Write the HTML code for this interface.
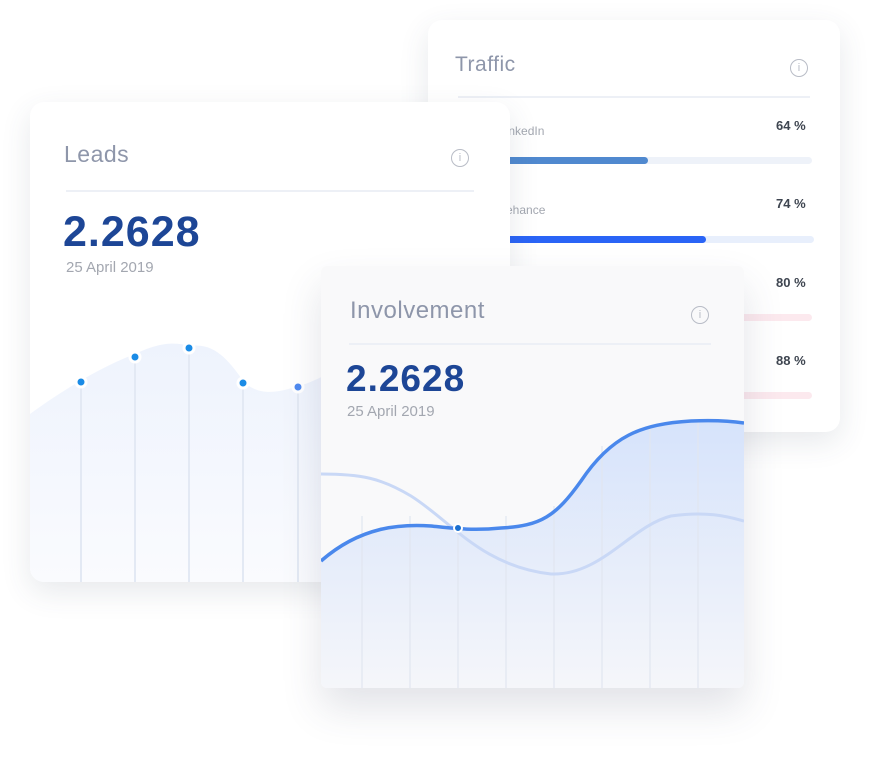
<!DOCTYPE html>
<html><head><style>
body{margin:0;width:871px;height:784px;background:#fff;position:relative;overflow:hidden;font-family:"Liberation Sans",sans-serif}
.card{position:absolute;border-radius:14px;background:#fff;box-shadow:0 10px 30px rgba(60,70,100,.12);overflow:hidden}
.title{position:absolute;color:#8e96aa;font-size:22px;letter-spacing:.5px}
.info{position:absolute;width:16px;height:16px;border:1.3px solid #b8bcc6;border-radius:50%;color:#b8bcc6;font-size:11px;text-align:center;line-height:16px}
.hr{position:absolute;height:2px;background:#edf0f6}
.num{position:absolute;color:#1d4696;font-weight:bold;font-size:40px}
.date{position:absolute;color:#a3a7b0;font-size:15px}
.pct{position:absolute;color:#3e4550;font-weight:bold;font-size:13px}
.lbl{position:absolute;color:#a3a7b0;font-size:12px}
.track{position:absolute;height:7px;border-radius:4px}
</style></head><body>
<div class="card" style="left:428px;top:20px;width:412px;height:412px">
<div class="title" style="left:27px;top:33px;font-size:21px">Traffic</div>
<div class="info" style="left:362px;top:39px">i</div>
<div class="hr" style="left:30px;top:76px;width:352px"></div>
<div class="lbl" style="left:71px;top:104px">LinkedIn</div><div class="pct" style="left:348px;top:98px">64 %</div>
<div class="track" style="left:30px;top:137px;width:354px;background:#eef2f9"></div>
<div class="track" style="left:30px;top:137px;width:190px;background:#5089cf"></div>
<div class="lbl" style="left:70px;top:183px">Behance</div><div class="pct" style="left:348px;top:176px">74 %</div>
<div class="track" style="left:30px;top:216px;width:356px;background:#e8effc"></div>
<div class="track" style="left:30px;top:216px;width:248px;background:#2a64f6"></div>
<div class="pct" style="left:348px;top:255px">80 %</div>
<div class="track" style="left:30px;top:294px;width:354px;background:#fce9ee"></div>
<div class="pct" style="left:348px;top:333px">88 %</div>
<div class="track" style="left:30px;top:372px;width:354px;background:#fce9ee"></div>
</div>
<div class="card" style="left:30px;top:102px;width:480px;height:480px">
<div class="title" style="left:34px;top:39px;font-size:23px">Leads</div>
<div class="info" style="left:421px;top:47px">i</div>
<div class="hr" style="left:36px;top:88px;width:408px"></div>
<div class="num" style="left:33px;top:106px;font-size:43px;letter-spacing:1px">2.2628</div>
<div class="date" style="left:36px;top:157px">25 April 2019</div>
<svg style="position:absolute;left:0;top:0" width="480" height="480">
<defs><linearGradient id="g1" x1="0" y1="0" x2="0" y2="1"><stop offset="0" stop-color="#eef3fd"/><stop offset="1" stop-color="#fafbfe"/></linearGradient></defs>
<path d="M0 312 C30 290 70 265 105 252 C130 240 145 240 160 244 C185 240 200 260 214 280 C230 295 250 290 268 284 C285 280 300 270 320 260 L320 480 L0 480Z" fill="url(#g1)"/>
<g stroke="#e3e9f4" stroke-width="2"><line x1="51" y1="280" x2="51" y2="480"/><line x1="105" y1="255" x2="105" y2="480"/><line x1="159" y1="246" x2="159" y2="480"/><line x1="213" y1="281" x2="213" y2="480"/><line x1="268" y1="285" x2="268" y2="480"/></g>
<g stroke="#fff" stroke-width="3"><circle cx="51" cy="280" r="5" fill="#1a8be6"/><circle cx="105" cy="255" r="5" fill="#1a8be6"/><circle cx="159" cy="246" r="5" fill="#1a8be6"/><circle cx="213" cy="281" r="5" fill="#1a8be6"/><circle cx="268" cy="285" r="5" fill="#4f8af0"/></g>
</svg>
</div>
<div class="card" style="left:321px;top:266px;width:423px;height:422px;background:#f9f9fa;border-radius:6px;box-shadow:0 20px 40px rgba(60,70,100,.15)">
<div class="title" style="left:29px;top:31px;font-size:24px">Involvement</div>
<div class="info" style="left:370px;top:40px">i</div>
<div class="hr" style="left:28px;top:77px;width:362px"></div>
<div class="num" style="left:25px;top:92px;font-size:37px;letter-spacing:1px">2.2628</div>
<div class="date" style="left:26px;top:137px">25 April 2019</div>
<svg style="position:absolute;left:0;top:0" width="423" height="422">
<defs><linearGradient id="g2" x1="0" y1="0" x2="0" y2="1"><stop offset="0" stop-color="#d6e3fb"/><stop offset="1" stop-color="#f5f6fa"/></linearGradient></defs>
<path d="M0 295 C40 260 80 258 110 260 C130 262 150 265 180 262 C220 260 235 250 260 215 C290 170 320 158 370 155 C395 154 410 155 423 157 L423 422 L0 422Z" fill="url(#g2)"/>
<g stroke="#e1e6ef" stroke-width="1.2"><line x1="41" y1="250" x2="41" y2="422"/><line x1="89" y1="250" x2="89" y2="422"/><line x1="137" y1="262" x2="137" y2="422"/><line x1="185" y1="250" x2="185" y2="422"/><line x1="233" y1="240" x2="233" y2="422"/><line x1="281" y1="180" x2="281" y2="422"/><line x1="329" y1="160" x2="329" y2="422"/><line x1="377" y1="155" x2="377" y2="422"/></g>
<path d="M0 208 C40 208 60 212 90 230 C130 255 160 300 230 308 C280 310 310 260 350 250 C385 245 405 250 423 255" fill="none" stroke="#c9d8f6" stroke-width="3"/>
<path d="M0 295 C40 260 80 258 110 260 C130 262 150 265 180 262 C220 260 235 250 260 215 C290 170 320 158 370 155 C395 154 410 155 423 157" fill="none" stroke="#4a88ec" stroke-width="3.5"/>
<circle cx="137" cy="262" r="4" fill="#1a6fd0" stroke="#fff" stroke-width="2"/>
</svg>
</div>
</body></html>
